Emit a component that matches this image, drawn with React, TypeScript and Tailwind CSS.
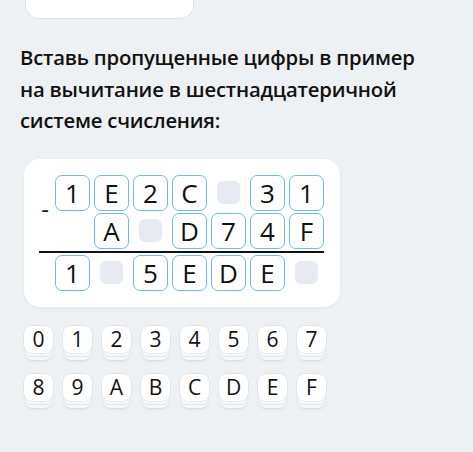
const top = ["1", "E", "2", "C", "", "3", "1"];
const mid = [null, "A", "", "D", "7", "4", "F"];
const bottom = ["1", "", "5", "E", "D", "E", ""];
const keys = ["0", "1", "2", "3", "4", "5", "6", "7", "8", "9", "A", "B", "C", "D", "E", "F"];

function Cell({ value }: { value: string | null }) {
  if (value === null) return <div className="w-[35px] h-[36px]" />;
  if (value === "")
    return (
      <div className="w-[35px] h-[36px] flex items-center justify-center">
        <div className="w-[23px] h-[23px] rounded-[6px] bg-[#e7eaf0]" />
      </div>
    );
  return (
    <div className="w-[35px] h-[36px] rounded-[7px] border-[1.5px] border-[#6cbfe2] bg-white flex items-center justify-center text-[26px] leading-none text-[#111]">
      {value}
    </div>
  );
}

function Key({ label }: { label: string }) {
  return (
    <button className="w-[29px] h-[27px] rounded-[8px] bg-white text-[21px] leading-none text-[#111] flex items-center justify-center shadow-[0_0_0_0.5px_#d5d9de,0_4px_0_-0.5px_#f6f7f9,0_4.5px_0_-0.5px_#cfd3d8,0_8px_0_-1px_#f6f7f9,0_8.5px_0_-1px_#cfd3d8,0_10px_4px_-2px_rgba(0,0,0,0.08)]">
      {label}
    </button>
  );
}

export default function App() {
  return (
    <div className="w-[473px] h-[452px] bg-[#eef1f3] overflow-hidden font-['Open_Sans',sans-serif]">
      <div className="ml-[25px] w-[169px] h-[19px] bg-white rounded-b-[14px] border border-t-0 border-[#dfe3e7]" />

      <h2 className="mt-[23px] px-5 text-[20.3px] leading-[31.5px] font-semibold text-[#111] tracking-[-0.2px]">
        Вставь пропущенные цифры в пример
        <br />
        на вычитание в шестнадцатеричной
        <br />
        системе счисления:
      </h2>

      <div className="mt-[22px] ml-6 w-[316px] rounded-[16px] bg-white shadow-[0_1px_3px_rgba(0,0,0,0.06)] pt-4 pb-4 pl-[15px] pr-4">
        <div className="grid grid-cols-[12px_repeat(7,35px)] gap-x-1 gap-y-[2px]">
          <div className="row-span-2 flex items-center justify-center text-[24px] leading-none text-[#111] pb-[6px]">-</div>
          {top.map((v, i) => (
            <Cell key={"t" + i} value={v} />
          ))}
          {mid.map((v, i) => (
            <Cell key={"m" + i} value={v} />
          ))}
          <div className="col-span-8 h-[2px] bg-[#111]" />
          <div />
          {bottom.map((v, i) => (
            <Cell key={"b" + i} value={v} />
          ))}
        </div>
      </div>

      <div className="mt-[19px] ml-6 grid grid-cols-[repeat(8,29px)] gap-x-[10px] gap-y-[21px]">
        {keys.map((k) => (
          <Key key={k} label={k} />
        ))}
      </div>
    </div>
  );
}
